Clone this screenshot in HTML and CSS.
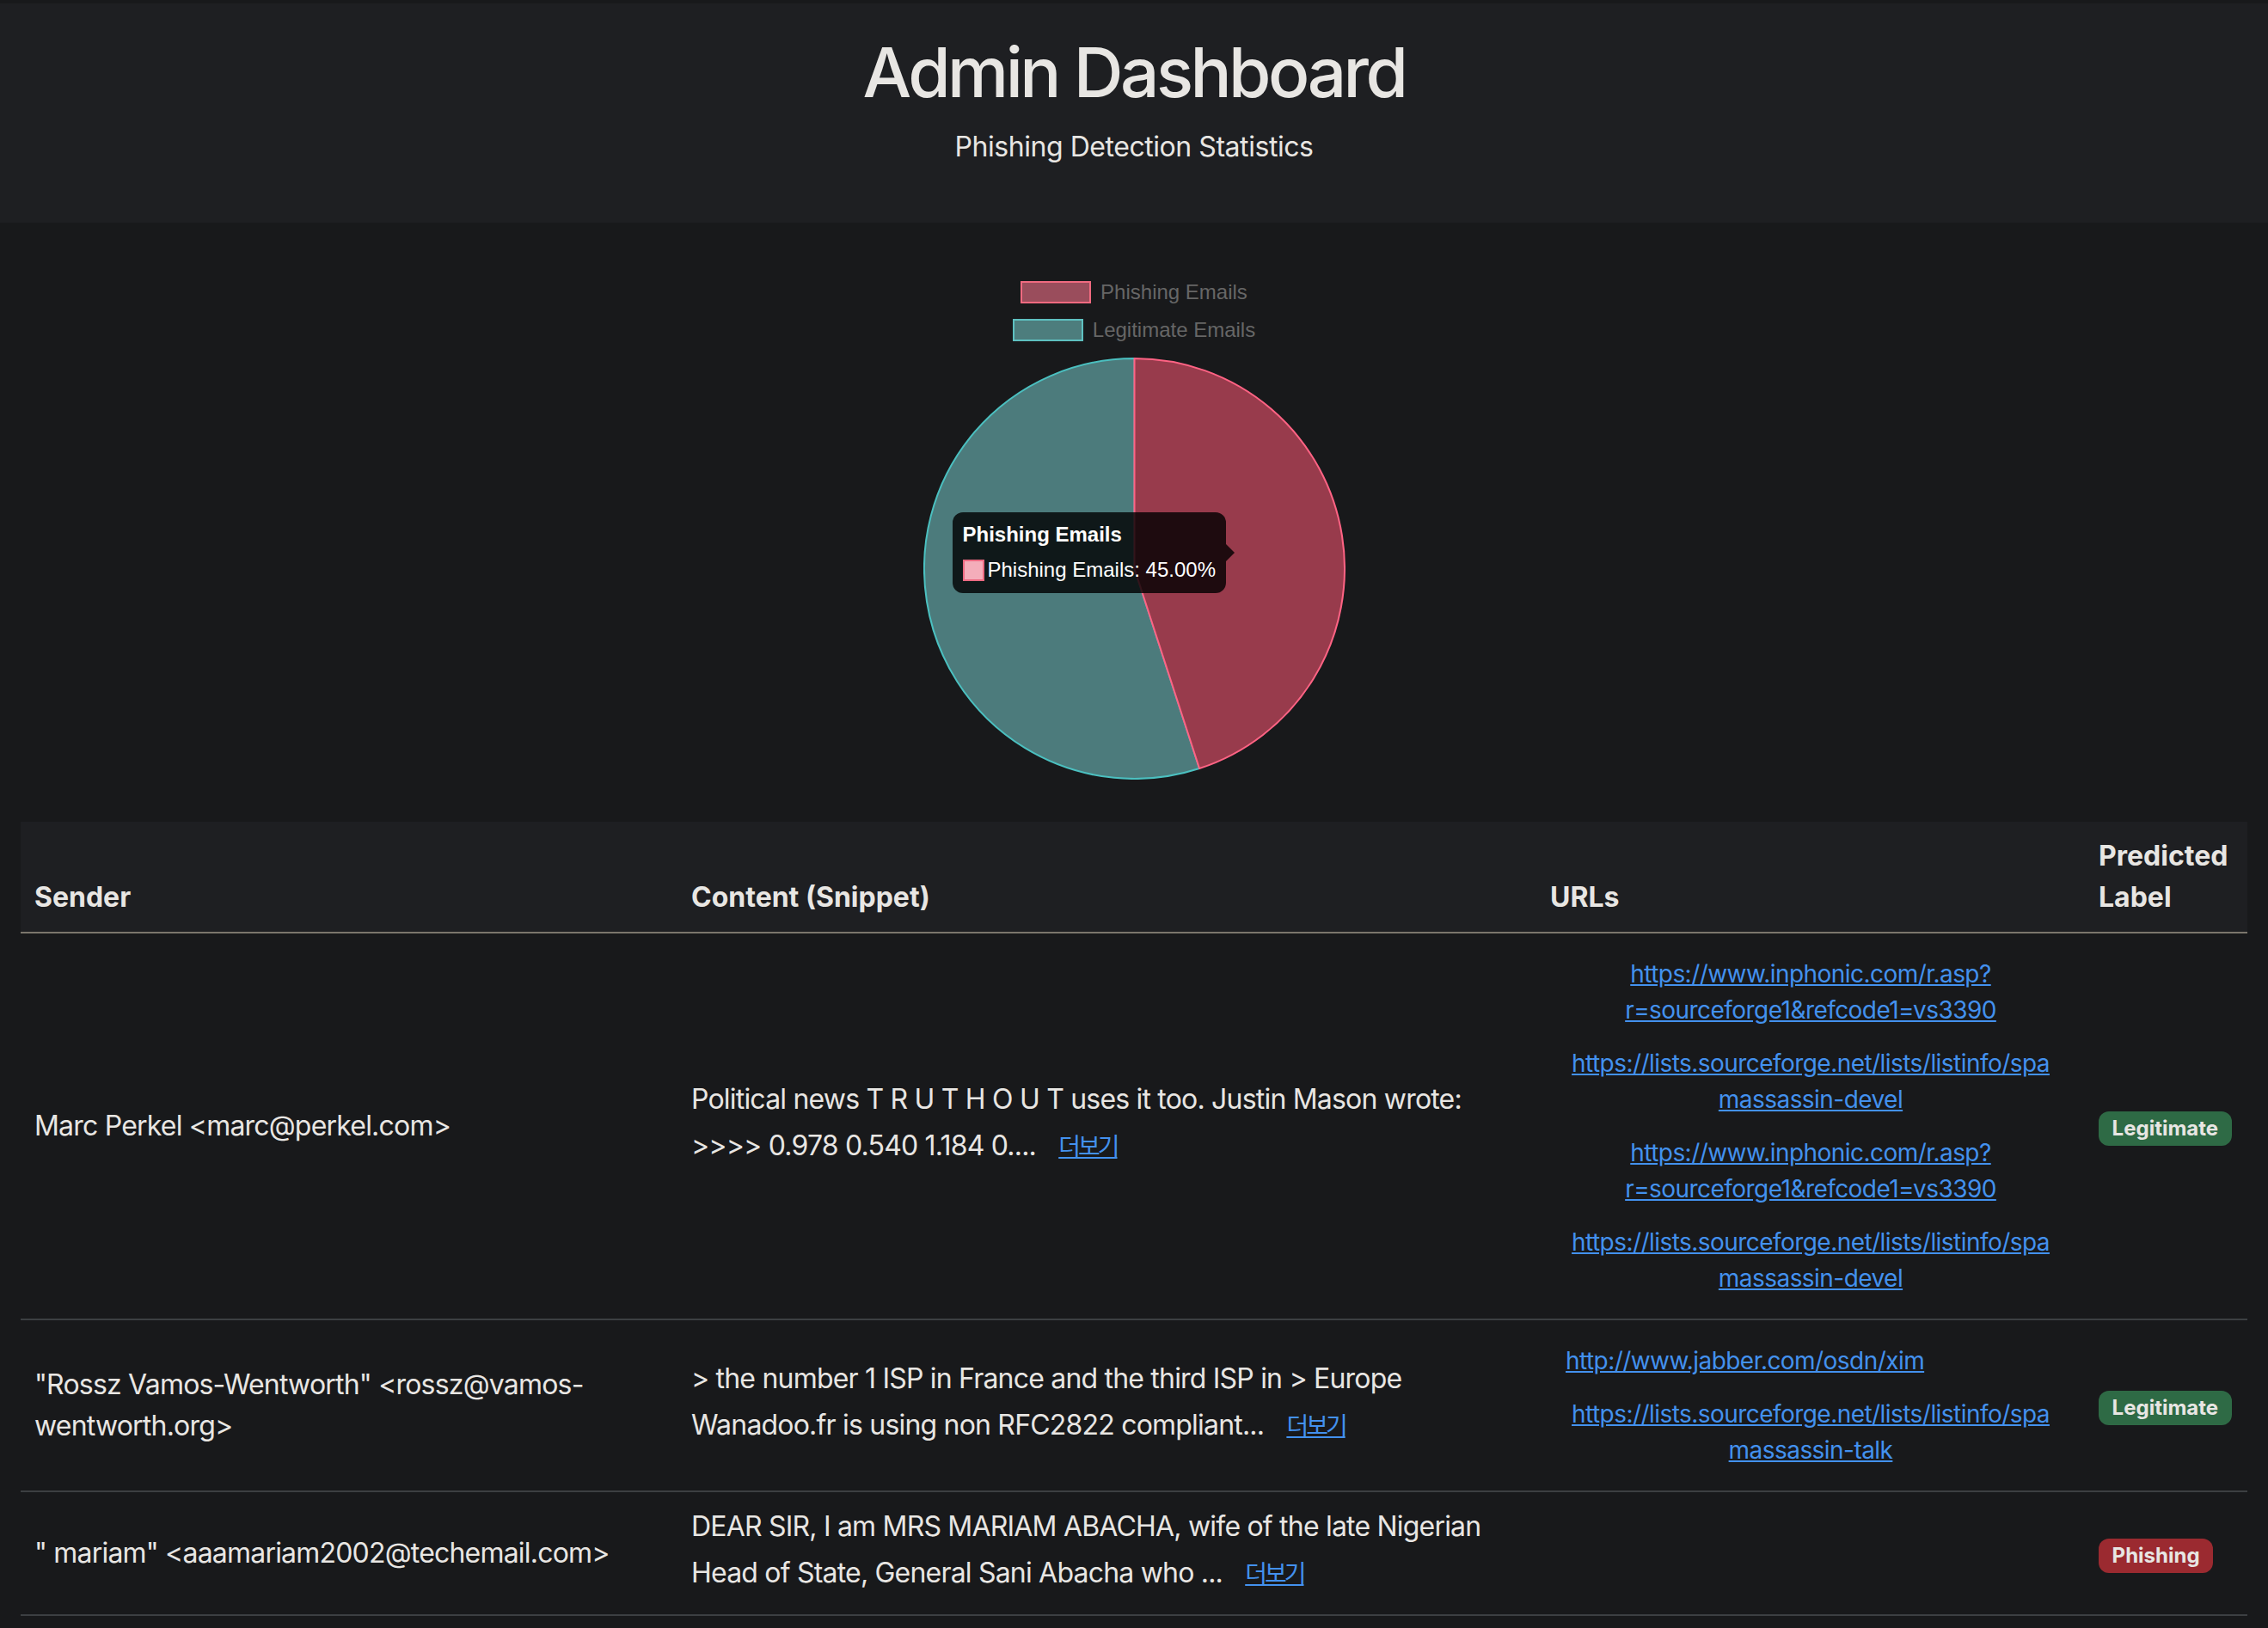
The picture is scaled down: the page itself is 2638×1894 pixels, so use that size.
FILE: index.html
```html
<!DOCTYPE html>
<html lang="ko">
<head>
<meta charset="utf-8">
<title>Admin Dashboard</title>
<link rel="stylesheet" href="styles.css">
</head>
<body>
<header class="page-header">
  <h1 class="title">Admin Dashboard</h1>
  <p class="subtitle">Phishing Detection Statistics</p>
</header>

<section class="chart-section">
  <ul class="legend">
    <li class="legend-item"><span class="legend-box legend-box--phish"></span><span class="legend-text">Phishing Emails</span></li>
    <li class="legend-item"><span class="legend-box legend-box--legit"></span><span class="legend-text">Legitimate Emails</span></li>
  </ul>
  <div class="pie-wrap">
    <svg class="pie" width="491" height="491" viewBox="0 0 491 491" xmlns="http://www.w3.org/2000/svg">
      <path d="M245.5 245.5 L321.05 478.03 A244.5 244.5 0 1 1 245.5 1 Z" fill="#4c7b7c" stroke="#4bc0c0" stroke-width="2" stroke-linejoin="round"/>
      <path d="M245.5 245.5 L245.5 1 A244.5 244.5 0 0 1 321.05 478.03 Z" fill="#983b4c" stroke="#ff6384" stroke-width="2" stroke-linejoin="round"/>
    </svg>
    <div class="tooltip">
      <div class="tooltip-title">Phishing Emails</div>
      <div class="tooltip-body"><span class="tooltip-swatch"></span><span>Phishing Emails: 45.00%</span></div>
    </div>
  </div>
</section>

<table class="emails">
  <colgroup>
    <col class="col-sender">
    <col class="col-content">
    <col class="col-urls">
    <col class="col-label">
  </colgroup>
  <thead>
    <tr>
      <th>Sender</th>
      <th>Content (Snippet)</th>
      <th>URLs</th>
      <th>Predicted Label</th>
    </tr>
  </thead>
  <tbody>
    <tr>
      <td>Marc Perkel &lt;marc@perkel.com&gt;</td>
      <td>Political news T R U T H O U T uses it too. Justin Mason wrote: &gt;&gt;&gt;&gt; 0.978 0.540 1.184 0.... <a class="more" href="#">더보기</a></td>
      <td>
        <div class="url-list">
          <a class="url" href="#">https://www.inphonic.com/r.asp?r=sourceforge1&amp;refcode1=vs3390</a>
          <a class="url" href="#">https://lists.sourceforge.net/lists/listinfo/spamassassin-devel</a>
          <a class="url" href="#">https://www.inphonic.com/r.asp?r=sourceforge1&amp;refcode1=vs3390</a>
          <a class="url" href="#">https://lists.sourceforge.net/lists/listinfo/spamassassin-devel</a>
        </div>
      </td>
      <td><span class="badge badge--legit">Legitimate</span></td>
    </tr>
    <tr>
      <td>"Rossz Vamos-Wentworth" &lt;rossz@vamos-wentworth.org&gt;</td>
      <td>&gt; the number 1 ISP in France and the third ISP in &gt; Europe Wanadoo.fr is using non RFC2822 compliant... <a class="more" href="#">더보기</a></td>
      <td>
        <div class="url-list">
          <a class="url" href="#">http://www.jabber.com/osdn/xim</a>
          <a class="url" href="#">https://lists.sourceforge.net/lists/listinfo/spamassassin-talk</a>
        </div>
      </td>
      <td><span class="badge badge--legit">Legitimate</span></td>
    </tr>
    <tr>
      <td>" mariam" &lt;aaamariam2002@techemail.com&gt;</td>
      <td>DEAR SIR, I am MRS MARIAM ABACHA, wife of the late Nigerian Head of State, General Sani Abacha who ... <a class="more" href="#">더보기</a></td>
      <td></td>
      <td><span class="badge badge--phish">Phishing</span></td>
    </tr>
  </tbody>
</table>
</body>
</html>
```

FILE: styles.css
```css
* { box-sizing: border-box; }

body {
  margin: 0;
  background: #18191b;
  color: #e8e6e3;
  font-family: Inter, "Noto Sans", "Noto Sans CJK KR", sans-serif;
  font-size: 32px;
  line-height: 1.5;
}

.page-header {
  margin-top: 4px;
  background: #1e1f22;
  padding: 32px 0 64px;
  text-align: center;
}

.title {
  margin: 0 0 15px;
  font-size: 80px;
  font-weight: 500;
  line-height: 1.2;
  letter-spacing: -3.5px;
}

.subtitle {
  margin: 0;
  font-size: 32px;
  line-height: 48px;
  letter-spacing: -0.45px;
}

.chart-section {
  padding: 59px 0 49px;
  display: flex;
  flex-direction: column;
  align-items: center;
}

.legend {
  list-style: none;
  margin: 0;
  padding: 0;
  display: flex;
  flex-direction: column;
  align-items: center;
}

.legend-item {
  height: 44px;
  display: flex;
  align-items: center;
  gap: 11px;
}

.legend-box {
  width: 82px;
  height: 26px;
  border: 2px solid;
}

.legend-box--phish { background: #9a4d5c; border-color: #f06a80; }
.legend-box--legit { background: #4d7d7d; border-color: #5ec0c0; }

.legend-text {
  font-family: "Liberation Sans", Arial, sans-serif;
  font-size: 24px;
  line-height: 1;
  color: #666;
}

.pie-wrap {
  position: relative;
  margin-top: 10px;
  width: 491px;
  height: 491px;
}

.pie { display: block; }

.tooltip {
  position: absolute;
  left: 34px;
  top: 180px;
  padding: 12px;
  background: rgba(0, 0, 0, 0.8);
  border-radius: 12px;
  color: #fff;
  font-family: "Liberation Sans", Arial, sans-serif;
  font-size: 24px;
  line-height: 28.8px;
  white-space: nowrap;
}

.tooltip::after {
  content: "";
  position: absolute;
  left: 100%;
  top: 50%;
  margin-top: -10px;
  border-left: 10px solid rgba(0, 0, 0, 0.8);
  border-top: 10px solid transparent;
  border-bottom: 10px solid transparent;
}

.tooltip-title {
  font-weight: 700;
  margin-bottom: 12px;
}

.tooltip-body {
  display: flex;
  align-items: center;
}

.tooltip-swatch {
  width: 25px;
  height: 25px;
  margin-right: 4px;
  background: #f4adba;
  border: 2px solid #ec6a82;
}

.emails {
  width: calc(100% - 48px);
  margin: 0 24px;
  border-collapse: collapse;
  table-layout: fixed;
}

.col-sender { width: 764px; }
.col-content { width: 999px; }
.col-urls { width: 638px; }
.col-label { width: 189px; }

.emails th {
  background: #1e1f22;
  padding: 16px;
  text-align: left;
  vertical-align: bottom;
  font-weight: 700;
  border-bottom: 2px solid #7b766c;
}

.emails td {
  padding: 16px;
  vertical-align: middle;
  border-bottom: 2px solid #3c3f42;
  letter-spacing: -0.8px;
}

.more {
  display: inline-block;
  padding: 8px 16px;
  border: 2px solid transparent;
  font-family: Inter, "Noto Sans CJK KR", sans-serif;
  font-size: 28px;
  line-height: 1.5;
  color: #4391ee;
  text-decoration: underline;
  letter-spacing: -3px;
}

.url-list {
  display: flex;
  flex-direction: column;
  align-items: flex-start;
  gap: 20px;
  padding: 10px 18px;
}

.url {
  display: block;
  text-align: center;
  overflow-wrap: anywhere;
  font-size: 28px;
  line-height: 42px;
  letter-spacing: -0.55px;
  color: #4391ee;
  text-decoration: underline;
}

.badge {
  display: inline-block;
  padding: 8.4px 15.6px;
  font-size: 24px;
  font-weight: 700;
  line-height: 1;
  letter-spacing: 0;
  border-radius: 12px;
  color: #e8e6e3;
}

.badge--legit { background: #2e6a45; }
.badge--phish { background: #9b2a30; }
```
